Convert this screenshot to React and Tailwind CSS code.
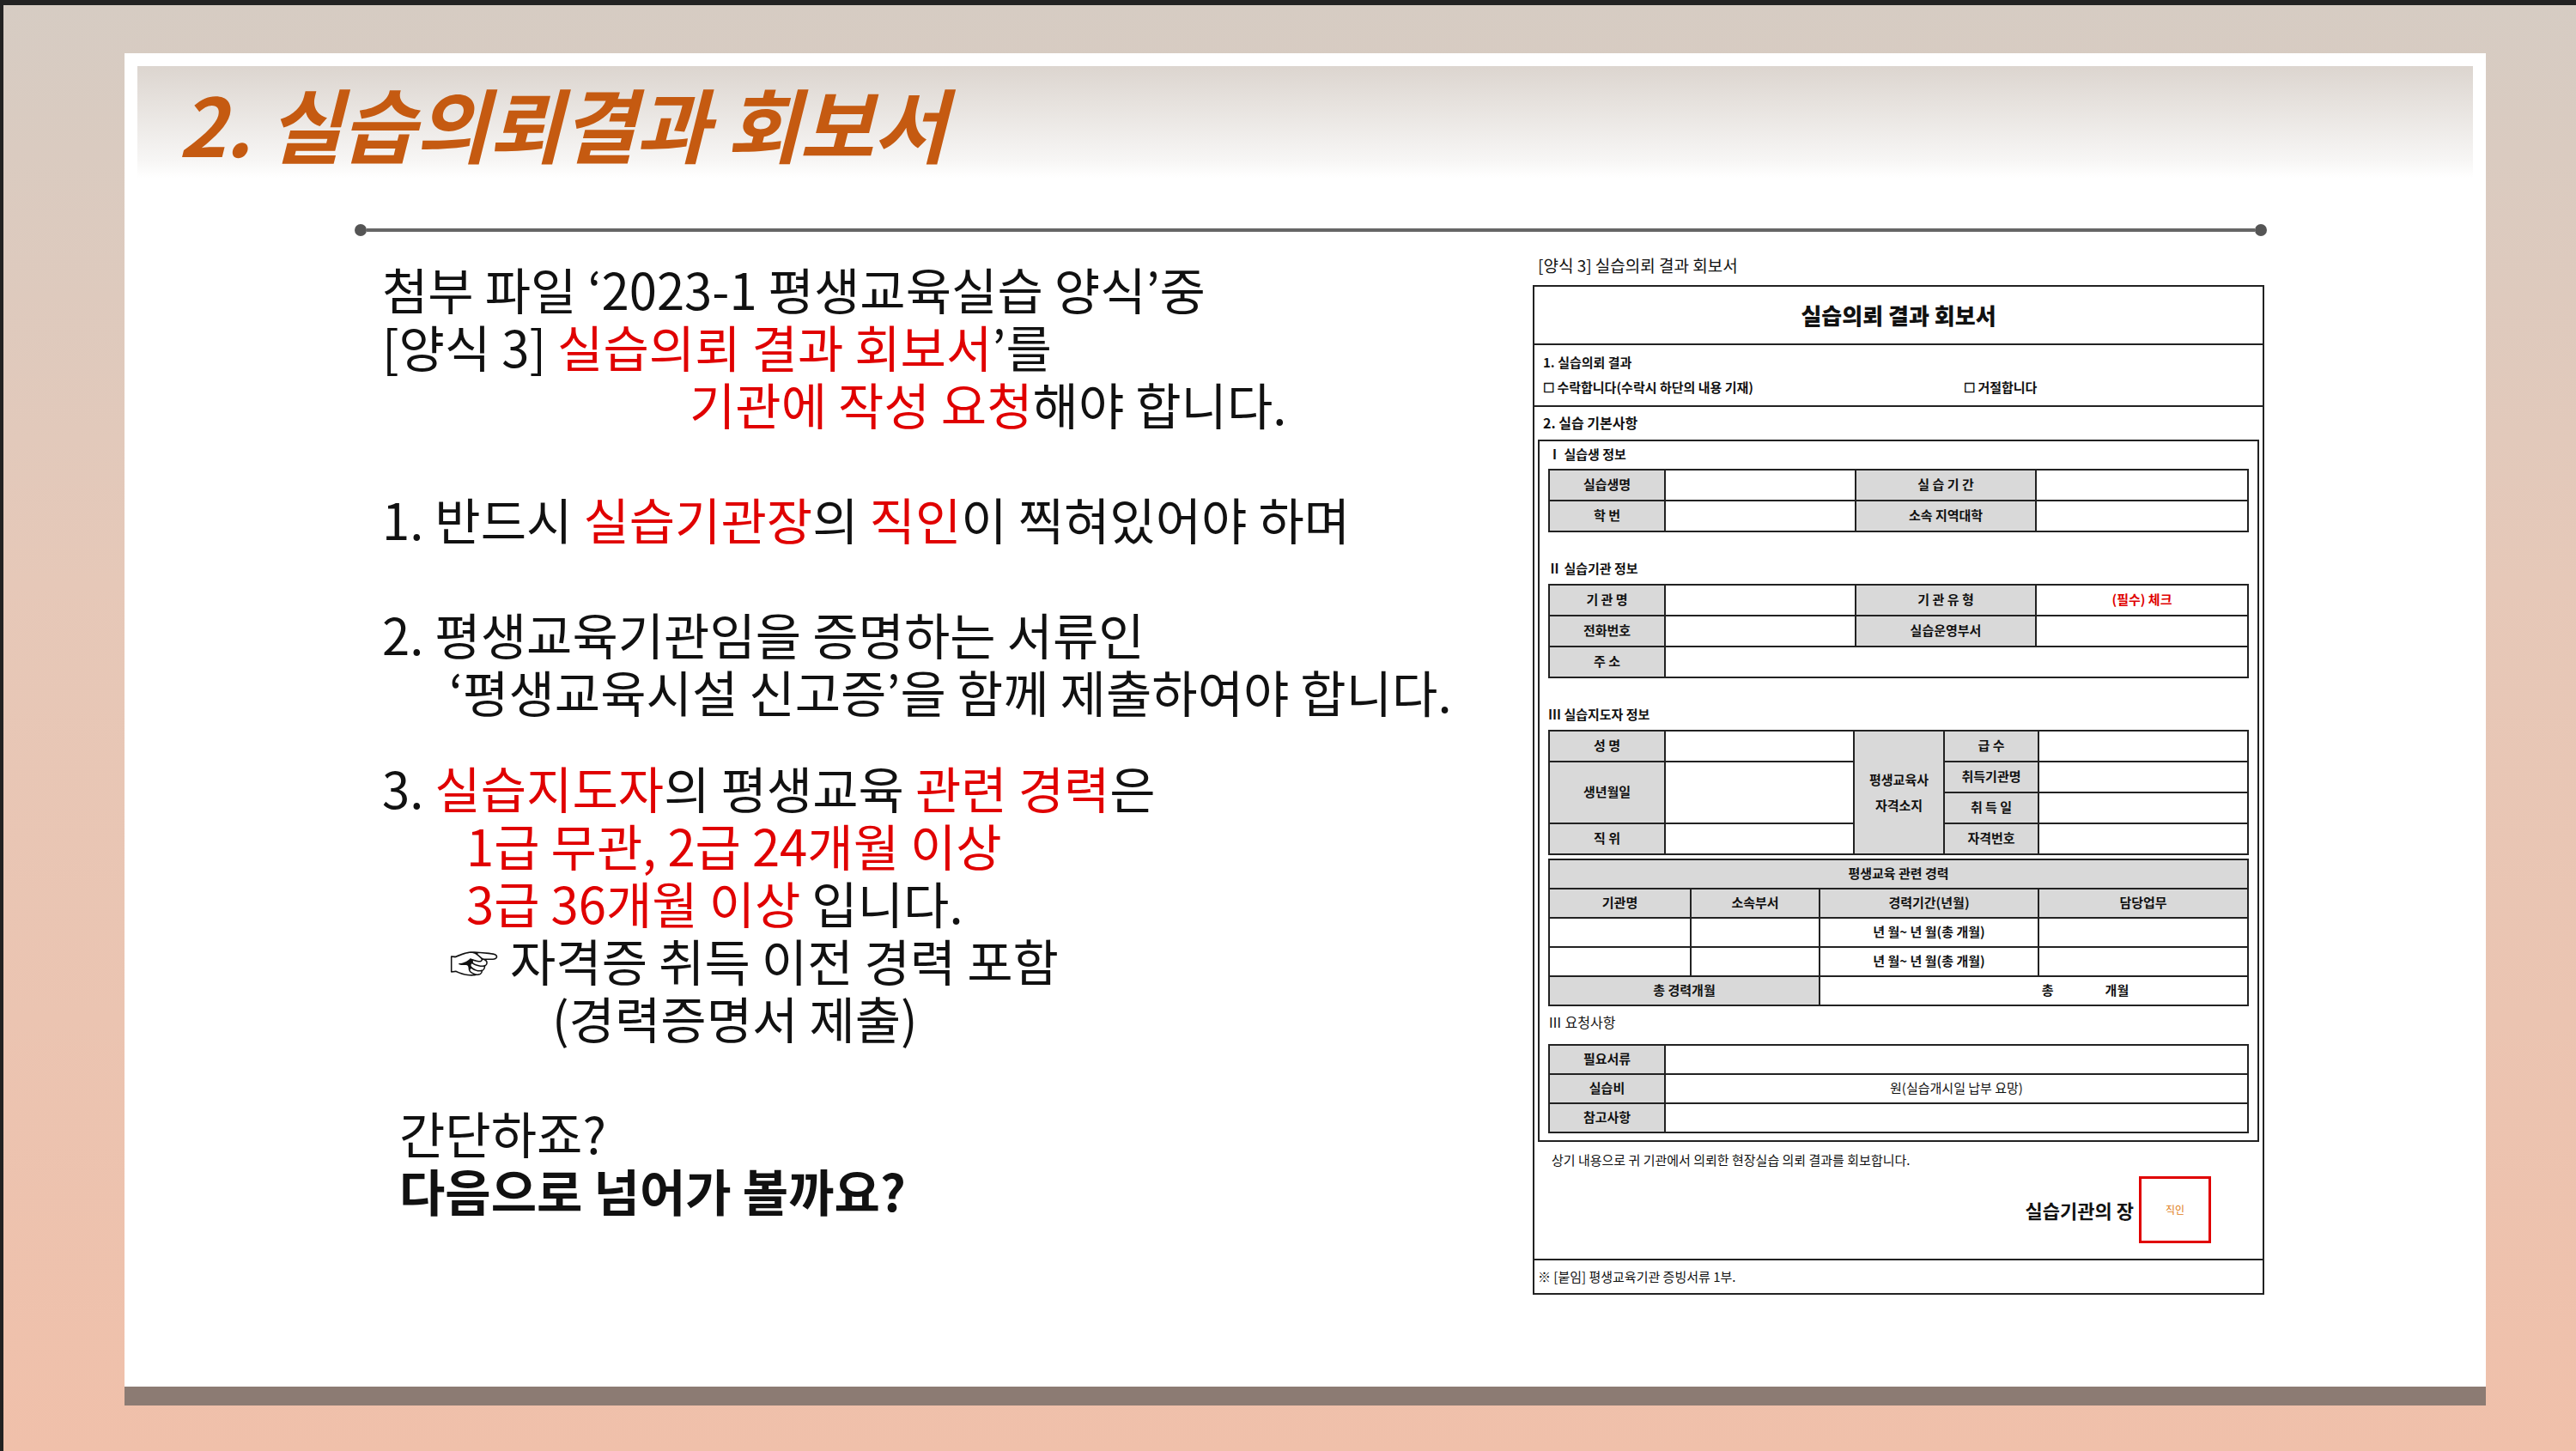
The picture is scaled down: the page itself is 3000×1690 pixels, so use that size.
const F = { fontFamily: '"Noto Sans CJK KR","Noto Sans",sans-serif' };
const R = ({ children }) => <span className="text-[#e00000]">{children}</span>;

function Cell({ children, g, className = "", ...p }) {
  return (
    <td {...p} className={`border-2 border-[#222] text-center font-bold text-[15px] ${g ? "bg-[#d9d9d9]" : "bg-white"} ${className}`}>
      {children}
    </td>
  );
}

function Form() {
  return (
    <div className="w-[852px] text-[#111]" style={F}>
      <div className="text-[19px] mb-[8px] ml-[6px]">[양식 3] 실습의뢰 결과 회보서</div>
      <div className="border-2 border-[#222]">
        <div className="h-[68px] flex items-center justify-center text-[26px] font-black border-b-2 border-[#222]">실습의뢰 결과 회보서</div>
        <div className="h-[72px] border-b-2 border-[#222] px-[10px] text-[15px] font-bold flex flex-col justify-center gap-[6px]">
          <div>1. 실습의뢰 결과</div>
          <div className="flex"><span className="w-[490px]">☐ 수락합니다(수락시 하단의 내용 기재)</span><span>☐ 거절합니다</span></div>
        </div>
        <div className="px-[4px] pt-[6px]">
          <div className="text-[16px] font-bold px-[6px] h-[32px]">2. 실습 기본사항</div>
          <div className="border-2 border-[#222] px-[10px] pb-[2px]">
            <div className="text-[15px] font-bold h-[32px] flex items-center">Ⅰ 실습생 정보</div>
            <table className="w-full border-collapse">
              <tbody>
                <tr className="h-[36px]"><Cell g className="w-[135px]">실습생명</Cell><Cell className="w-[222px]"></Cell><Cell g className="w-[210px]">실 습 기 간</Cell><Cell></Cell></tr>
                <tr className="h-[36px]"><Cell g>학 번</Cell><Cell></Cell><Cell g>소속 지역대학</Cell><Cell></Cell></tr>
              </tbody>
            </table>
            <div className="text-[15px] font-bold h-[48px] flex items-end pb-[6px] mt-[12px]">Ⅱ 실습기관 정보</div>
            <table className="w-full border-collapse">
              <tbody>
                <tr className="h-[36px]"><Cell g className="w-[135px]">기 관 명</Cell><Cell className="w-[222px]"></Cell><Cell g className="w-[210px]">기 관 유 형</Cell><Cell className="text-[#e00000] text-[12px]">(필수) 체크</Cell></tr>
                <tr className="h-[36px]"><Cell g>전화번호</Cell><Cell></Cell><Cell g>실습운영부서</Cell><Cell></Cell></tr>
                <tr className="h-[36px]"><Cell g>주 소</Cell><Cell colSpan={3}></Cell></tr>
              </tbody>
            </table>
            <div className="text-[15px] font-bold h-[48px] flex items-end pb-[6px] mt-[12px]">Ⅲ 실습지도자 정보</div>
            <table className="w-full border-collapse">
              <tbody>
                <tr className="h-[36px]"><Cell g className="w-[135px]">성 명</Cell><Cell className="w-[220px]"></Cell><Cell g rowSpan={4} className="w-[105px] leading-[30px]">평생교육사<br />자격소지</Cell><Cell g className="w-[110px]">급 수</Cell><Cell></Cell></tr>
                <tr className="h-[36px]"><Cell g rowSpan={2}>생년월일</Cell><Cell rowSpan={2}></Cell><Cell g>취득기관명</Cell><Cell></Cell></tr>
                <tr className="h-[36px]"><Cell g>취 득 일</Cell><Cell></Cell></tr>
                <tr className="h-[36px]"><Cell g>직 위</Cell><Cell></Cell><Cell g>자격번호</Cell><Cell></Cell></tr>
              </tbody>
            </table>
            <table className="w-full border-collapse mt-[4px]">
              <tbody>
                <tr className="h-[34px]"><Cell g colSpan={4}>평생교육 관련 경력</Cell></tr>
                <tr className="h-[34px]"><Cell g className="w-[165px]">기관명</Cell><Cell g className="w-[150px]">소속부서</Cell><Cell g className="w-[255px]">경력기간(년월)</Cell><Cell g>담당업무</Cell></tr>
                <tr className="h-[34px]"><Cell></Cell><Cell></Cell><Cell className="text-[13px]">년 월~ 년 월(총 개월)</Cell><Cell></Cell></tr>
                <tr className="h-[34px]"><Cell></Cell><Cell></Cell><Cell className="text-[13px]">년 월~ 년 월(총 개월)</Cell><Cell></Cell></tr>
                <tr className="h-[34px]"><Cell g colSpan={2}>총 경력개월</Cell><Cell colSpan={2}><span className="ml-[120px]">총</span><span className="ml-[60px]">개월</span></Cell></tr>
              </tbody>
            </table>
            <div className="text-[16px] h-[36px] flex items-center">Ⅲ 요청사항</div>
            <table className="w-full border-collapse mt-[8px] mb-[6px]">
              <tbody>
                <tr className="h-[34px]"><Cell g className="w-[135px]">필요서류</Cell><Cell></Cell></tr>
                <tr className="h-[34px]"><Cell g>실습비</Cell><Cell className="font-normal text-[14px]">원(실습개시일 납부 요망)</Cell></tr>
                <tr className="h-[34px]"><Cell g>참고사항</Cell><Cell></Cell></tr>
              </tbody>
            </table>
          </div>
          <div className="text-[15px] px-[16px] pt-[10px]">상기 내용으로 귀 기관에서 의뢰한 현장실습 의뢰 결과를 회보합니다.</div>
          <div className="flex justify-end items-center gap-[6px] pr-[56px] pt-[8px] pb-[18px]">
            <span className="text-[22px] font-bold">실습기관의 장</span>
            <div className="w-[84px] h-[78px] border-[3px] border-[#e00000] flex items-center justify-center text-[12px] text-[#e08020]">직인</div>
          </div>
        </div>
        <div className="border-t-2 border-[#222] h-[40px] flex items-center px-[4px] text-[15px]">※ [붙임] 평생교육기관 증빙서류 1부.</div>
      </div>
    </div>
  );
}

export default function App() {
  return (
    <div className="w-[3000px] h-[1690px] bg-[linear-gradient(180deg,#d6ccc3_0%,#e6c8b8_40%,#f0c0aa_100%)] border-t-[6px] border-l-[4px] border-[#222] flex flex-col" style={F}>
      <div className="ml-[141px] mt-[56px] w-[2750px] h-[1553px] bg-white flex flex-col">
        <div className="mx-[15px] mt-[15px] h-[130px] bg-[linear-gradient(180deg,#dcd5cf_0%,#f7f6f5_85%,#ffffff_100%)] flex items-center pl-[48px]">
          <span className="text-[94px] font-bold italic text-[#c55a11] tracking-[-1px]">2. 실습의뢰결과 회보서</span>
        </div>
        <div className="flex items-center ml-[268px] w-[2227px] mt-[54px]">
          <div className="w-[14px] h-[14px] rounded-full bg-[#555]" />
          <div className="flex-1 h-[4px] bg-[#666]" />
          <div className="w-[14px] h-[14px] rounded-full bg-[#555]" />
        </div>
        <div className="flex">
          <div className="ml-[300px] mt-[28px] text-[58px] leading-[67px] text-[#111] w-[1340px]">
            <div>첨부 파일 ‘2023-1 평생교육실습 양식’중</div>
            <div>[양식 3] <R>실습의뢰 결과 회보서</R>’를</div>
            <div className="pl-[358px]"><R>기관에 작성 요청</R>해야 합니다.</div>
            <div className="mt-[67px]">1. 반드시 <R>실습기관장</R>의 <R>직인</R>이 찍혀있어야 하며</div>
            <div className="mt-[67px]">2. 평생교육기관임을 증명하는 서류인</div>
            <div className="pl-[78px] whitespace-nowrap">‘평생교육시설 신고증’을 함께 제출하여야 합니다.</div>
            <div className="mt-[45px]">3. <R>실습지도자</R>의 평생교육 <R>관련 경력</R>은</div>
            <div className="pl-[98px]"><R>1급 무관, 2급 24개월 이상</R></div>
            <div className="pl-[98px]"><R>3급 36개월 이상</R> 입니다.</div>
            <div className="pl-[78px]">☞ 자격증 취득 이전 경력 포함</div>
            <div className="pl-[198px]">(경력증명서 제출)</div>
            <div className="mt-[67px] pl-[20px]">간단하죠?</div>
            <div className="pl-[20px] font-bold">다음으로 넘어가 볼까요?</div>
          </div>
          <div className="mt-[20px]"><Form /></div>
        </div>
      </div>
      <div className="ml-[141px] w-[2750px] h-[22px] bg-[#8c7b73]" />
    </div>
  );
}
